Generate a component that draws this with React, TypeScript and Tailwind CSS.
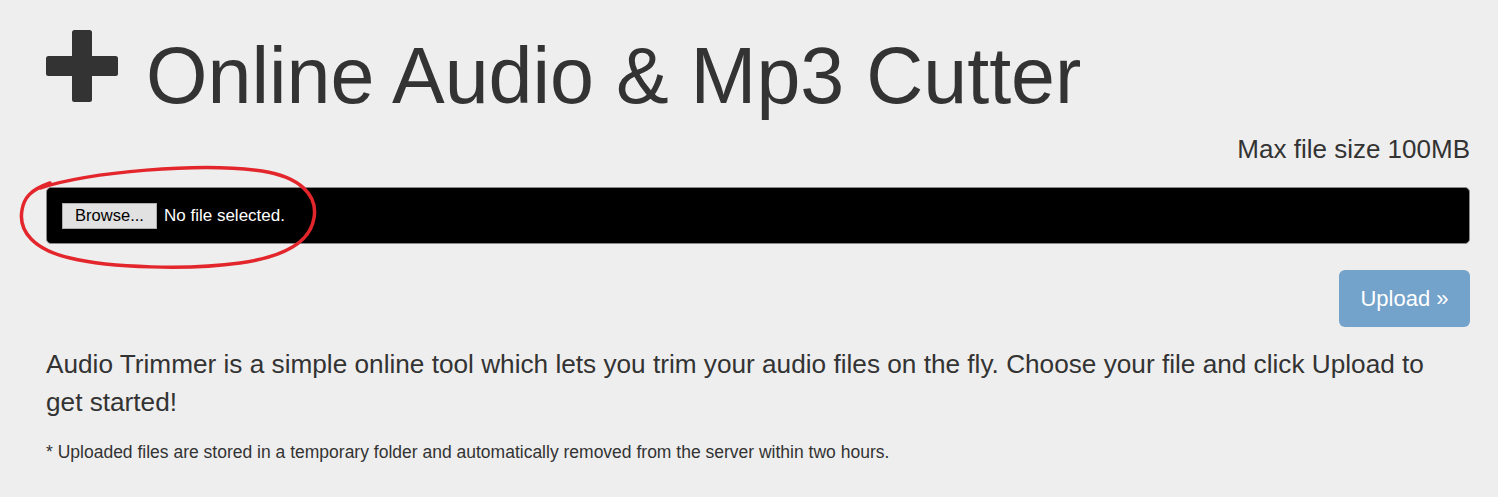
export default function App() {
  return (
    <div
      className="relative min-h-[497px] bg-[#eeeeee] pl-[46px] pr-[28px] pt-[30px] text-[#333333]"
      style={{ fontFamily: '"Liberation Sans", Arial, sans-serif' }}
    >
      {/* Heading */}
      <div className="flex items-start">
        <svg width="72" height="72" viewBox="0 0 72 72" className="shrink-0">
          <rect x="26" y="0" width="20" height="72" rx="2.5" fill="#333333" />
          <rect x="0" y="26" width="72" height="20" rx="2.5" fill="#333333" />
        </svg>
        <h1 className="ml-[28px] mt-[6px] text-[79px] leading-none font-normal">Online Audio &amp; Mp3 Cutter</h1>
      </div>

      <p className="mt-[21px] text-right text-[26px] leading-none">Max file size 100MB</p>

      {/* File input */}
      <div className="mt-[25px] flex h-[57px] items-center rounded-[5px] border border-[#8a8a8a] bg-black pl-[15px]">
        <button className="flex h-[26px] w-[95px] items-center justify-center border border-[#adadad] bg-[#e1e1e1] text-[16.5px] text-black">
          Browse...
        </button>
        <span className="ml-[7px] text-[17px] text-white">No file selected.</span>
      </div>

      <div className="mt-[26px] flex justify-end">
        <button className="h-[57px] w-[131px] rounded-[6px] bg-[#73a2ca] text-[22px] text-white">Upload »</button>
      </div>

      <p className="mt-[19px] pr-[30px] text-[26.2px] leading-[37.5px]">
        Audio Trimmer is a simple online tool which lets you trim your audio files on the fly. Choose your file and
        click Upload to get started!
      </p>

      <p className="mt-[19px] text-[17.5px] leading-[25px]">
        * Uploaded files are stored in a temporary folder and automatically removed from the server within two hours.
      </p>

      {/* Red hand-drawn annotation */}
      <svg
        className="pointer-events-none absolute left-0 top-0"
        width="1498"
        height="497"
        viewBox="0 0 1498 497"
        fill="none"
      >
        <path
          d="M40 188 C90 172 200 162 262 171 C300 177 318 195 314 218 C310 244 282 257 240 263 C190 270 110 268 70 258 C35 250 18 232 22 210 C24 198 30 190 50 183"
          stroke="#e3262b"
          strokeWidth="3.5"
          strokeLinecap="round"
        />
      </svg>
    </div>
  );
}
